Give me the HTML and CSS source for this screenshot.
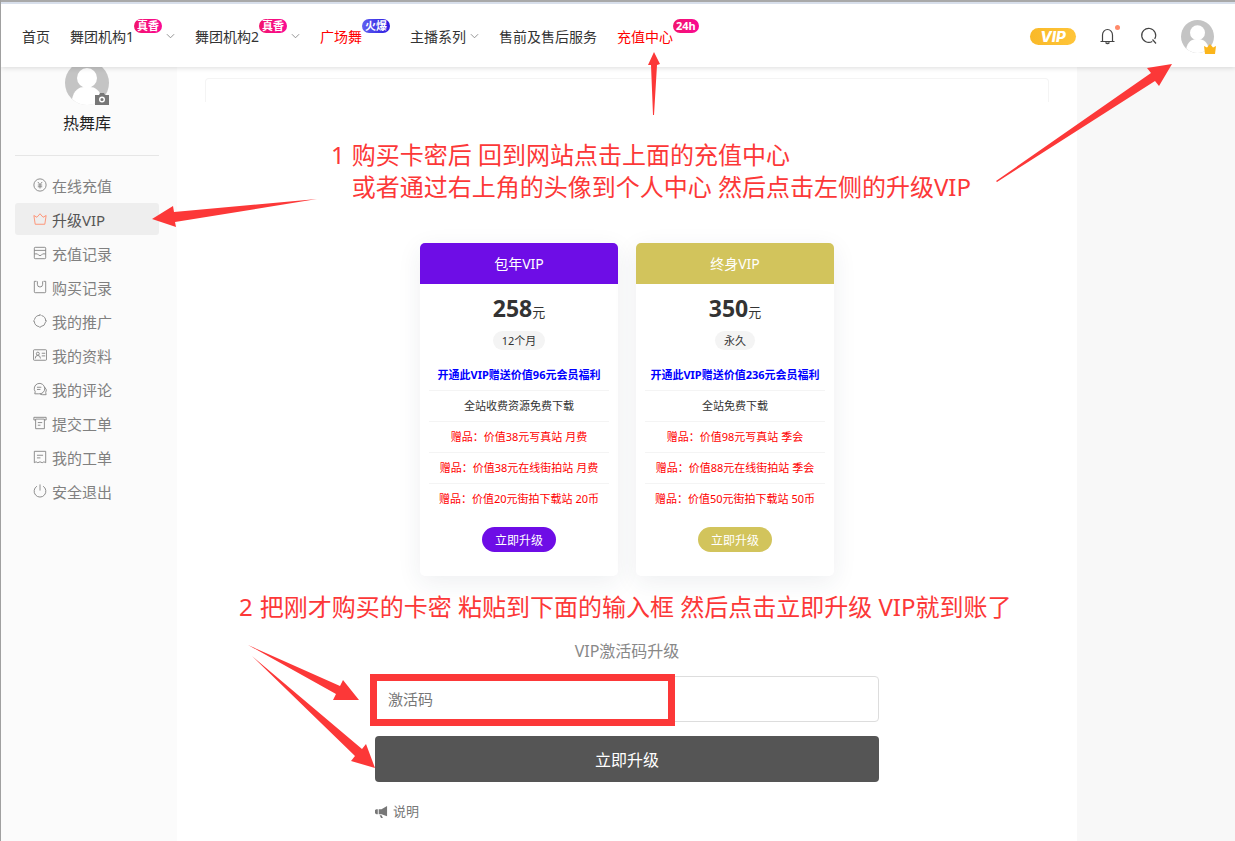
FILE: index.html
```html
<!DOCTYPE html>
<html lang="zh-CN">
  <head>
    <meta charset="UTF-8" />
    <meta name="viewport" content="width=device-width, initial-scale=1.0" />
    <title>升级VIP - 热舞库</title>
    <link rel="stylesheet" href="styles.css">
  </head>
  <body>
    <header class="header">
      <nav class="nav">
        <a href="#">首页</a>
        <a href="#">舞团机构1<span class="badge pink">真香</span><svg class="arrow" viewBox="0 0 10 6"><path d="M1 1l4 4 4-4" /></svg></a>
        <a href="#">舞团机构2<span class="badge pink">真香</span><svg class="arrow" viewBox="0 0 10 6"><path d="M1 1l4 4 4-4" /></svg></a>
        <a href="#" class="hot">广场舞<span class="badge blue">火爆</span></a>
        <a href="#">主播系列<svg class="arrow" viewBox="0 0 10 6"><path d="M1 1l4 4 4-4" /></svg></a>
        <a href="#">售前及售后服务</a>
        <a href="#" class="hot">充值中心<span class="badge pink">24h</span></a>
      </nav>
      <div class="tools">
        <a href="#" class="vip-tag">VIP</a>
        <button type="button" class="tool" aria-label="消息">
          <svg viewBox="0 0 18 18"><path d="M1.500 14.500h14M3.500 14.500V8a5 5.500 0 0 1 10 0v6.500M6.500 15.500q2 2 4 0" /></svg>
          <span class="dot"></span>
        </button>
        <button type="button" class="tool" aria-label="搜索">
          <svg viewBox="0 0 18 18"><path d="M12.300 14.400a7 7 0 1 1 2.400-2.400M12.500 12.500l3.500 4" /></svg>
        </button>
        <a href="#" class="head-avatar" aria-label="个人中心">
          <svg viewBox="0 0 44 44"><circle cx="22" cy="22" r="22" fill="#c4c4c4" /><circle cx="22" cy="17" r="10" fill="#fff" /><path d="M7 38c2-9 7-12 12-12h6c5 0 10 3 12 12a22 22 0 0 1-30 0z" fill="#fff" /></svg>
          <svg class="crown" viewBox="0 0 12 10"><path d="M0 2l3 1.500L6 0l3 3.500L12 2l-1 8H1z" fill="#fbb51b" /></svg>
        </a>
      </div>
    </header>

    <div class="page">
      <aside class="sidebar">
        <div class="user">
          <div class="avatar">
            <svg viewBox="0 0 44 44"><circle cx="22" cy="22" r="22" fill="#c4c4c4" /><circle cx="22" cy="17" r="10" fill="#fff" /><path d="M7 38c2-9 7-12 12-12h6c5 0 10 3 12 12a22 22 0 0 1-30 0z" fill="#fff" /></svg>
            <svg class="camera" viewBox="0 0 14 12"><path d="M1 2h3l1-2h4l1 2h4v10H0V2z" fill="#777" /><circle cx="7" cy="6.500" r="2.300" fill="none" stroke="#fff" stroke-width="1.400" /></svg>
          </div>
          <p class="name">热舞库</p>
        </div>
        <ul class="menu">
          <li><a href="#"><svg viewBox="0 0 16 16"><circle cx="8" cy="8" r="7" /><path d="M5.500 4.500L8 7.500l2.500-3M8 7.500V12M5.500 8h5M5.500 10h5" /></svg>在线充值</a></li>
          <li><a href="#" class="active"><svg viewBox="0 0 16 16"><path d="M1 4l3.500 2L8 2l3.500 4L15 4l-1.500 10h-11z" /></svg>升级VIP</a></li>
          <li><a href="#"><svg viewBox="0 0 16 16"><rect x="1.500" y="1.500" width="13" height="13" rx="1" /><path d="M1.500 5h13M1.500 9H5q3 4 6 0h3.500" /></svg>充值记录</a></li>
          <li><a href="#"><svg viewBox="0 0 16 16"><path d="M4 1.500H1.500v12q0 1 1 1h11q1 0 1-1v-12H12M5 1.500V5q0 3 3 3t3-3V1.500" /></svg>购买记录</a></li>
          <li><a href="#"><svg viewBox="0 0 16 16"><circle cx="8" cy="8" r="6.500" stroke-dasharray="8.200 2" stroke-dashoffset="-1" /><path d="M8 0v2M8 14v2M0 8h2M14 8h2" /></svg>我的推广</a></li>
          <li><a href="#"><svg viewBox="0 0 16 16"><rect x=".5" y="2" width="15" height="12" rx="1" /><circle cx="5.500" cy="6.500" r="1.700" /><path d="M2.500 12q0-3.500 3-3.500t3 3.500M10 6h4M10 9h4" /></svg>我的资料</a></li>
          <li><a href="#"><svg viewBox="0 0 16 16"><path d="M2 13.500l.5-2.500a6 6 0 1 1 4 2.500zM13.500 6q3 3 1 6l.5 2.500H11q-2 0-3-1M4.500 6h5M4.500 8.500h4" /></svg>我的评论</a></li>
          <li><a href="#"><svg viewBox="0 0 16 16"><path d="M3 4.500H1v-3h14v3h-2M3 3.500v11h10v-11zM5.500 7.500h5M5.500 10.500h3" /></svg>提交工单</a></li>
          <li><a href="#"><svg viewBox="0 0 16 16"><path d="M1.500 1.500h13v13l-2-1-2 1-2.500-1-2.500 1-2-1-2 1zM4.500 6h7M4.500 9h4" /></svg>我的工单</a></li>
          <li><a href="#"><svg viewBox="0 0 16 16"><path d="M4.500 2.500a6.700 6.700 0 1 0 7 0M8 .5v7" /></svg>安全退出</a></li>
        </ul>
      </aside>

      <main class="panel">
        <div class="banner"></div>

        <div class="cards">
          <section class="card year">
            <h2>包年VIP</h2>
            <p class="price">258<small>元</small></p>
            <span class="term">12个月</span>
            <ul class="features">
              <li class="gift">开通此VIP赠送价值96元会员福利</li>
              <li>全站收费资源免费下载</li>
              <li class="red">赠品：价值38元写真站 月费</li>
              <li class="red">赠品：价值38元在线街拍站 月费</li>
              <li class="red">赠品：价值20元街拍下载站 20币</li>
            </ul>
            <button type="button" class="buy">立即升级</button>
          </section>
          <section class="card life">
            <h2>终身VIP</h2>
            <p class="price">350<small>元</small></p>
            <span class="term">永久</span>
            <ul class="features">
              <li class="gift">开通此VIP赠送价值236元会员福利</li>
              <li>全站免费下载</li>
              <li class="red">赠品：价值98元写真站 季会</li>
              <li class="red">赠品：价值88元在线街拍站 季会</li>
              <li class="red">赠品：价值50元街拍下载站 50币</li>
            </ul>
            <button type="button" class="buy">立即升级</button>
          </section>
        </div>

        <form class="code-form">
          <label for="code">VIP激活码升级</label>
          <div class="field">
            <input type="text" id="code" placeholder="激活码" />
            <span class="mark"></span>
          </div>
          <button type="submit" class="submit-btn">立即升级</button>
          <p class="note">
            <svg viewBox="0 0 14 14"><path d="M13 1v11L7 10H4V4.500h3zM3 4.500V10H1.500L0 9V5.500l1.500-1zM5 11h2l1.500 3h-2z" fill="#777" /></svg>说明
          </p>
        </form>
      </main>
    </div>

    <!-- tutorial notes drawn over the page -->
    <div class="guide">
      <svg width="1235" height="841" viewBox="0 0 1235 841">
        <polygon points="654,52 660,64 657,65 654,115 653,115 651,65 648,65" />
        <polygon points="1172,64 1159,86 1155,81 997,182 996,181 1151,73 1147,68" />
        <polygon points="152,219 173,206 174,212 317,199 175,222 176,227" />
        <polygon points="248,645 340,686 343,680 359,700 333,700 336,694" />
        <polygon points="252,656 362,749 366,744 375,768 351,761 355,756" />
      </svg>
      <div class="step step-one">
        <span>1</span>
        <p>购买卡密后 回到网站点击上面的充值中心<br />或者通过右上角的头像到个人中心 然后点击左侧的升级VIP</p>
      </div>
      <div class="step step-two">
        <span>2</span>
        <p>把刚才购买的卡密 粘贴到下面的输入框 然后点击立即升级 VIP就到账了</p>
      </div>
    </div>
  </body>
</html>
```

FILE: styles.css
```css
* {
  margin: 0;
  padding: 0;
  box-sizing: border-box;
}

body {
  position: relative;
  min-height: 100vh;
  font-family: "Noto Sans", "Noto Sans CJK SC", sans-serif;
  font-size: 14px;
  color: #333;
  background: #f8f8f8;
  border-left: 1px solid #a0a0a0;
}

a {
  color: inherit;
  text-decoration: none;
}

ul {
  list-style: none;
}

button,
input {
  font-family: inherit;
}

svg {
  display: block;
}

/* header */
.header {
  position: absolute;
  top: 0;
  left: 0;
  right: 0;
  z-index: 2;
  display: flex;
  justify-content: space-between;
  align-items: center;
  height: 67px;
  padding: 3px 21px 0 21px;
  background: white;
  border-top: 2px solid #a9a9a9;
  box-shadow: inset 0 2px #d8dfeb, 0 1px 5px rgba(0, 0, 0, 0.14);
}

.nav {
  display: flex;
  gap: 20px;
}

.nav a {
  display: flex;
  align-items: center;
  height: 40px;
  white-space: nowrap;
}

.nav .hot {
  color: #f00;
}

.badge {
  margin-bottom: 20px;
  padding: 0 3px;
  height: 14px;
  border-radius: 7px;
  font-size: 11px;
  font-weight: bold;
  line-height: 14px;
  color: white;
}

.pink {
  background: linear-gradient(90deg, #f2146c, #fa0a94);
}

.blue {
  background: linear-gradient(90deg, #6060f0, #2a1ae0);
}

.arrow {
  width: 9px;
  height: 6px;
  margin-left: 4px;
  fill: none;
  stroke: #888;
}

.tools {
  display: flex;
  align-items: center;
  gap: 23px;
}

.vip-tag {
  width: 46px;
  height: 17px;
  border-radius: 9px;
  background: linear-gradient(90deg, #f9b928, #ffc53a);
  color: white;
  font-family: Inter, sans-serif;
  font-size: 15px;
  font-style: italic;
  font-weight: 800;
  line-height: 17px;
  text-align: center;
}

.tool {
  position: relative;
  width: 18px;
  height: 18px;
  border: none;
  background: none;
  cursor: pointer;
}

.tool svg {
  width: 18px;
  height: 18px;
  fill: none;
  stroke: #444;
  stroke-width: 1.2;
}

.dot {
  position: absolute;
  top: -2px;
  right: -3px;
  width: 5px;
  height: 5px;
  border-radius: 50%;
  background: #ff8a6a;
}

.head-avatar {
  position: relative;
}

.head-avatar svg {
  width: 33px;
  height: 33px;
}

.head-avatar .crown {
  position: absolute;
  right: -2px;
  bottom: -1px;
  width: 12px;
  height: 10px;
}

/* layout */
.page {
  display: grid;
  grid-template-columns: 176px minmax(0, 1fr) 158px;
  min-height: 100vh;
}

.sidebar {
  padding: 61px 18px 0 14px;
  background: #fbfbfb;
}

.user {
  padding-bottom: 20px;
  border-bottom: 1px solid #e6e6e6;
  text-align: center;
}

.avatar {
  position: relative;
  width: 44px;
  height: 44px;
  margin: 0 auto 6px;
}

.avatar .camera {
  position: absolute;
  right: 0;
  bottom: 0;
  width: 14px;
  height: 12px;
}

.name {
  font-size: 16px;
  line-height: 24px;
  color: #222;
}

.menu {
  display: grid;
  gap: 2px;
  padding-top: 13px;
}

.menu a {
  display: flex;
  align-items: center;
  gap: 5px;
  height: 32px;
  padding-left: 18px;
  border-radius: 3px;
  font-size: 15px;
  color: #808080;
}

.menu svg {
  width: 14px;
  height: 14px;
  fill: none;
  stroke: #808080;
}

.menu .active {
  background: #eee;
  color: #555;
}

.menu .active svg {
  stroke: #ff8a6a;
}

.panel {
  padding: 78px 28px 0;
  background: white;
}

.banner {
  height: 24px;
  margin-bottom: 141px;
  border: 1px solid #f4f4f4;
  border-bottom: none;
  border-radius: 4px 4px 0 0;
}

/* price cards */
.cards {
  display: flex;
  justify-content: center;
  gap: 18px;
}

.card {
  width: 198px;
  padding-bottom: 24px;
  border-radius: 5px;
  background: white;
  box-shadow: 0 6px 24px rgba(40, 50, 80, 0.08);
  text-align: center;
}

.card h2 {
  height: 41px;
  border-radius: 5px 5px 0 0;
  font-size: 14px;
  font-weight: normal;
  line-height: 41px;
  color: white;
}

.year h2,
.year .buy {
  background: #6e0de6;
}

.life h2,
.life .buy {
  background: #d2c45c;
}

.price {
  padding-top: 8px;
  font-size: 23px;
  font-weight: bold;
  line-height: 32px;
}

.price small {
  font-size: 13px;
  font-weight: normal;
}

.term {
  display: block;
  width: fit-content;
  height: 19px;
  margin: 3px auto 10px;
  padding: 0 9px;
  border-radius: 10px;
  background: #f4f4f4;
  font-size: 11px;
  line-height: 19px;
}

.features {
  padding: 0 9px;
  font-size: 11px;
  line-height: 30px;
  white-space: nowrap;
}

.features li {
  height: 31px;
  border-bottom: 1px solid #f4f4f4;
}

.features li:last-child {
  border-bottom: none;
}

.features .gift {
  font-weight: bold;
  color: #00f;
}

.features .red {
  color: #f00;
}

.buy {
  height: 25px;
  margin-top: 12px;
  padding: 0 13px;
  border: none;
  border-radius: 13px;
  font-size: 12px;
  color: white;
  cursor: pointer;
}

/* activation code form */
.code-form {
  max-width: 504px;
  margin: 63px auto 0;
}

.code-form label {
  display: block;
  margin-bottom: 13px;
  font-size: 16px;
  line-height: 24px;
  text-align: center;
  color: #888;
}

.field {
  position: relative;
  margin-bottom: 14px;
}

.field input {
  display: block;
  width: 100%;
  height: 46px;
  padding: 0 12px;
  border: 1px solid #ddd;
  border-radius: 4px;
  font-size: 15px;
}

.field input::placeholder {
  color: #777;
}

.mark {
  position: absolute;
  top: -2px;
  left: -5px;
  width: 305px;
  height: 52px;
  border: 7px solid #fc3838;
  pointer-events: none;
}

.submit-btn {
  display: block;
  width: 100%;
  height: 46px;
  border: none;
  border-radius: 4px;
  background: #555;
  font-size: 16px;
  color: white;
  cursor: pointer;
}

.note {
  display: flex;
  align-items: center;
  gap: 5px;
  padding: 19px 0;
  font-size: 13px;
  line-height: 20px;
  color: #777;
}

.note svg {
  width: 13px;
  height: 13px;
}

/* tutorial overlay */
.guide {
  position: absolute;
  inset: 0 0 0 -1px;
  z-index: 3;
  overflow: hidden;
  pointer-events: none;
  color: #fc3838;
}

.guide svg {
  fill: #fc3838;
}

.step {
  position: absolute;
  display: flex;
  gap: 7px;
  font-size: 24px;
  line-height: 32px;
  white-space: nowrap;
}

.step-one {
  top: 139px;
  left: 331px;
}

.step-two {
  top: 591px;
  left: 239px;
}
```
